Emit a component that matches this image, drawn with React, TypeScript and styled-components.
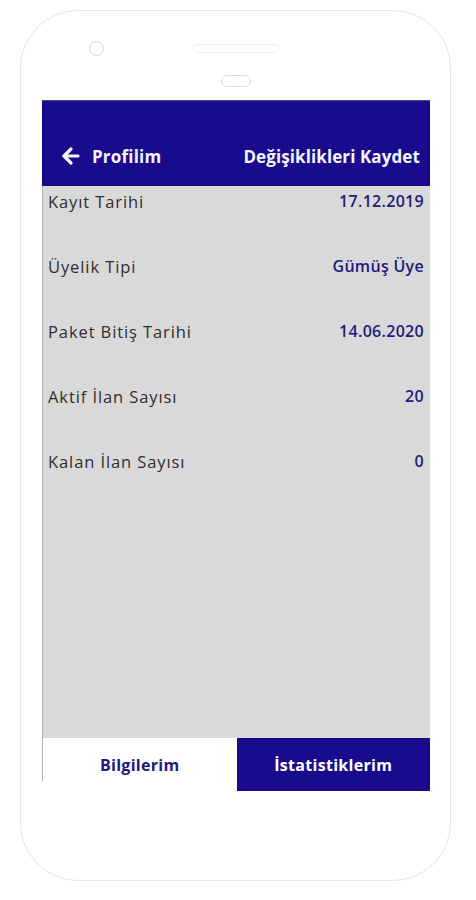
import React from "react";
import styled, { createGlobalStyle } from "styled-components";
import { ArrowLeft } from "lucide-react";

const Global = createGlobalStyle`
  html, body { margin: 0; padding: 0; background: #ffffff; }
  body { font-family: "Open Sans", "Liberation Sans", sans-serif; }
  * { box-sizing: border-box; }
`;

const Page = styled.div`
  width: 476px;
  height: 900px;
  padding: 10px 0 0 20px;
  background: #ffffff;
`;

const Phone = styled.div`
  width: 431px;
  height: 871px;
  border: 1px solid #e6e6e6;
  border-radius: 58px;
  background: #ffffff;
  display: flex;
  flex-direction: column;
  align-items: flex-start;
`;

const Bezel = styled.div`
  width: 100%;
  height: 89px;
  position: relative;
`;

const Camera = styled.div`
  position: absolute;
  left: 68px;
  top: 30px;
  width: 15px;
  height: 15px;
  border-radius: 50%;
  border: 1px solid #d8d8d8;
`;

const Speaker = styled.div`
  position: absolute;
  left: 172px;
  top: 33px;
  width: 86px;
  height: 9px;
  border-radius: 4px;
  border: 1px solid #f0f0f0;
`;

const Sensor = styled.div`
  position: absolute;
  left: 200px;
  top: 64px;
  width: 30px;
  height: 12px;
  border-radius: 6px;
  border: 1px solid #dedede;
`;

const Screen = styled.div`
  margin-left: 21px;
  width: 388px;
  height: 691px;
  display: flex;
  flex-direction: column;
`;

const Header = styled.div`
  height: 86px;
  background: #190c8c;
  border-top: 1px solid #4a44a0;
  display: flex;
  align-items: flex-end;
  justify-content: space-between;
  padding: 0 10px 18px 17px;
  color: #f4f4fa;
`;

const BackButton = styled.div`
  display: flex;
  align-items: center;
  gap: 9px;
  font-size: 17px;
  font-weight: 700;
  letter-spacing: 0.2px;
`;

const SaveButton = styled.div`
  font-size: 17px;
  font-weight: 700;
  letter-spacing: 0.1px;
`;

const Content = styled.div`
  flex: 1;
  background: #d9d9d9;
  border-left: 1px solid #b4b4b4;
  padding: 4px 6px 0 5px;
  display: flex;
  flex-direction: column;
  gap: 43px;
`;

const Row = styled.div`
  display: flex;
  justify-content: space-between;
  align-items: center;
  height: 22px;
`;

const Label = styled.span`
  font-size: 16.5px;
  color: #2f2f2f;
  font-weight: 400;
  letter-spacing: 0.9px;
`;

const Value = styled.span`
  font-size: 16px;
  color: #221a7c;
  font-weight: 600;
  letter-spacing: 0.3px;
`;

const Tabs = styled.div`
  height: 53px;
  display: flex;
  align-items: flex-start;
`;

const Tab = styled.div<{ $active?: boolean }>`
  flex: 1;
  height: ${(p) => (p.$active ? "53px" : "43px")};
  display: flex;
  align-items: ${(p) => (p.$active ? "center" : "flex-start")};
  justify-content: center;
  padding-top: ${(p) => (p.$active ? "0" : "16px")};
  font-size: 16px;
  font-weight: 700;
  letter-spacing: 0.3px;
  background: ${(p) => (p.$active ? "#190c8c" : "#ffffff")};
  color: ${(p) => (p.$active ? "#ffffff" : "#221a7c")};
  border-left: ${(p) => (p.$active ? "none" : "1px solid #b4b4b4")};
`;

const rows = [
  { label: "Kayıt Tarihi", value: "17.12.2019" },
  { label: "Üyelik Tipi", value: "Gümüş Üye" },
  { label: "Paket Bitiş Tarihi", value: "14.06.2020" },
  { label: "Aktif İlan Sayısı", value: "20" },
  { label: "Kalan İlan Sayısı", value: "0" },
];

export default function App() {
  return (
    <>
      <Global />
      <Page>
        <Phone>
          <Bezel>
            <Camera />
            <Speaker />
            <Sensor />
          </Bezel>
          <Screen>
            <Header>
              <BackButton>
                <ArrowLeft size={24} strokeWidth={3.2} color="#f4f4fa" />
                Profilim
              </BackButton>
              <SaveButton>Değişiklikleri Kaydet</SaveButton>
            </Header>
            <Content>
              {rows.map((r) => (
                <Row key={r.label}>
                  <Label>{r.label}</Label>
                  <Value>{r.value}</Value>
                </Row>
              ))}
            </Content>
            <Tabs>
              <Tab>Bilgilerim</Tab>
              <Tab $active>İstatistiklerim</Tab>
            </Tabs>
          </Screen>
        </Phone>
      </Page>
    </>
  );
}
